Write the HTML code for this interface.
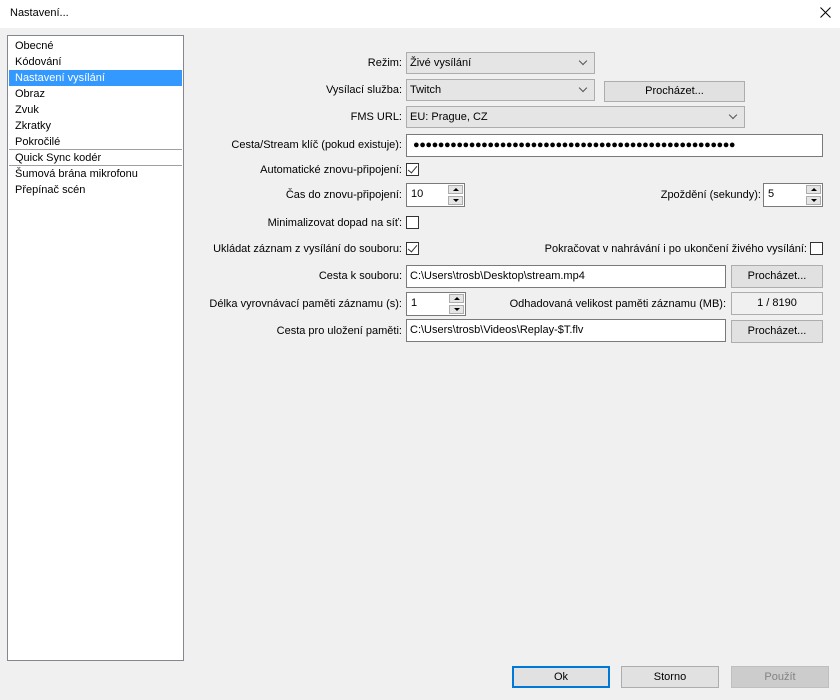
<!DOCTYPE html>
<html><head><meta charset="utf-8"><style>
*{box-sizing:border-box;margin:0;padding:0}
body{width:840px;height:700px;background:#f0f0f0;font-family:"Liberation Sans",sans-serif;font-size:11px;color:#000;position:relative;overflow:hidden}
.a{position:absolute}
.title{left:0;top:0;width:840px;height:28px;background:#fff}
.lbl{position:absolute;white-space:nowrap;line-height:14px;text-align:right}
.combo{position:absolute;background:#e5e5e5;border:1px solid #adadad;padding-left:3px;line-height:20px}
.combo:after{content:"";position:absolute;right:8px;top:5px;width:5px;height:5px;border-right:1px solid #555;border-bottom:1px solid #555;transform:rotate(45deg)}
.btn{position:absolute;background:#e1e1e1;border:1px solid #adadad;text-align:center;line-height:19px}
.inp{position:absolute;background:#fff;border:1px solid #7a7a7a;padding-left:3px;line-height:21px}
.cb{position:absolute;width:13px;height:13px;background:#fff;border:1px solid #333}
.cb.on:after{content:"";position:absolute;left:3px;top:0px;width:4px;height:8px;border-right:1px solid #333;border-bottom:1px solid #333;transform:rotate(40deg)}
.spin{position:absolute;background:#fff;border:1px solid #7a7a7a;padding-left:4px;line-height:21px}
.sb{position:absolute;right:1px;width:15px;height:9px;background:#e5e5e5;border:1px solid #adadad}
.sb.u{top:1px}.sb.d{bottom:1px}
.sb.u:after{content:"";position:absolute;left:4px;top:2px;border-left:3px solid transparent;border-right:3px solid transparent;border-bottom:3px solid #000}
.sb.d:after{content:"";position:absolute;left:4px;top:2px;border-left:3px solid transparent;border-right:3px solid transparent;border-top:3px solid #000}
.list{left:7px;top:35px;width:177px;height:626px;background:#fff;border:1px solid #828790}
.it{position:absolute;left:1px;width:173px;height:16px;line-height:16px;padding-left:6px}
</style></head><body>
<div class="a title"></div>
<div class="a" style="left:10px;top:6px;line-height:14px">Nastavení...</div>
<svg class="a" style="left:820px;top:7px" width="11" height="11"><path d="M0.5 0.5L10.5 10.5M10.5 0.5L0.5 10.5" stroke="#000" stroke-width="1"/></svg>

<div class="a list">
<div class="it" style="top:2px">Obecné</div>
<div class="it" style="top:18px">Kódování</div>
<div class="it" style="top:34px;background:#3399ff;color:#fff">Nastavení vysílání</div>
<div class="it" style="top:50px">Obraz</div>
<div class="it" style="top:66px">Zvuk</div>
<div class="it" style="top:82px">Zkratky</div>
<div class="it" style="top:98px">Pokročilé</div>
<div class="a" style="left:1px;top:113px;width:173px;height:1px;background:#a0a0a0"></div>
<div class="it" style="top:114px">Quick Sync kodér</div>
<div class="a" style="left:1px;top:129px;width:173px;height:1px;background:#a0a0a0"></div>
<div class="it" style="top:130px">Šumová brána mikrofonu</div>
<div class="it" style="top:146px">Přepínač scén</div>
</div>

<div class="lbl" style="right:438px;top:56px">Režim:</div>
<div class="combo" style="left:406px;top:52px;width:189px;height:22px">Živé vysílání</div>

<div class="lbl" style="right:438px;top:83px">Vysílací služba:</div>
<div class="combo" style="left:406px;top:79px;width:189px;height:22px">Twitch</div>
<div class="btn" style="left:604px;top:81px;width:141px;height:21px">Procházet...</div>

<div class="lbl" style="right:438px;top:110px">FMS URL:</div>
<div class="combo" style="left:406px;top:106px;width:339px;height:22px">EU: Prague, CZ</div>

<div class="lbl" style="right:438px;top:138px">Cesta/Stream klíč (pokud existuje):</div>
<div class="inp" style="left:406px;top:134px;width:417px;height:23px;font-size:11px;letter-spacing:-0.45px;padding-left:6px">●●●●●●●●●●●●●●●●●●●●●●●●●●●●●●●●●●●●●●●●●●●●●●●●●●●●</div>

<div class="lbl" style="right:438px;top:163px">Automatické znovu-připojení:</div>
<div class="cb on" style="left:406px;top:163px"></div>

<div class="lbl" style="right:438px;top:188px">Čas do znovu-připojení:</div>
<div class="spin" style="left:406px;top:183px;width:59px;height:24px">10<div class="sb u"></div><div class="sb d"></div></div>
<div class="lbl" style="right:79px;top:188px">Zpoždění (sekundy):</div>
<div class="spin" style="left:763px;top:183px;width:60px;height:24px">5<div class="sb u"></div><div class="sb d"></div></div>

<div class="lbl" style="right:438px;top:216px">Minimalizovat dopad na síť:</div>
<div class="cb" style="left:406px;top:216px"></div>

<div class="lbl" style="right:438px;top:242px">Ukládat záznam z vysílání do souboru:</div>
<div class="cb on" style="left:406px;top:242px"></div>
<div class="lbl" style="right:33px;top:242px">Pokračovat v nahrávání i po ukončení živého vysílání:</div>
<div class="cb" style="left:810px;top:242px"></div>

<div class="lbl" style="right:438px;top:269px">Cesta k souboru:</div>
<div class="inp" style="left:406px;top:265px;width:320px;height:23px">C:\Users\trosb\Desktop\stream.mp4</div>
<div class="btn" style="left:731px;top:265px;width:92px;height:23px;line-height:21px">Procházet...</div>

<div class="lbl" style="right:438px;top:297px">Délka vyrovnávací paměti záznamu (s):</div>
<div class="spin" style="left:406px;top:292px;width:60px;height:24px">1<div class="sb u"></div><div class="sb d"></div></div>
<div class="lbl" style="right:114px;top:297px">Odhadovaná velikost paměti záznamu (MB):</div>
<div class="a" style="left:731px;top:292px;width:92px;height:23px;border:1px solid #adadad;text-align:center;line-height:20px">1 / 8190</div>

<div class="lbl" style="right:438px;top:324px">Cesta pro uložení paměti:</div>
<div class="inp" style="left:406px;top:319px;width:320px;height:23px">C:\Users\trosb\Videos\Replay-$T.flv</div>
<div class="btn" style="left:731px;top:320px;width:92px;height:23px;line-height:21px">Procházet...</div>

<div class="btn" style="left:512px;top:666px;width:98px;height:22px;border:2px solid #0078d7;line-height:18px">Ok</div>
<div class="btn" style="left:621px;top:666px;width:98px;height:22px;line-height:20px">Storno</div>
<div class="btn" style="left:731px;top:666px;width:98px;height:22px;line-height:20px;background:#ccc;border-color:#bfbfbf;color:#838383">Použít</div>
</body></html>
